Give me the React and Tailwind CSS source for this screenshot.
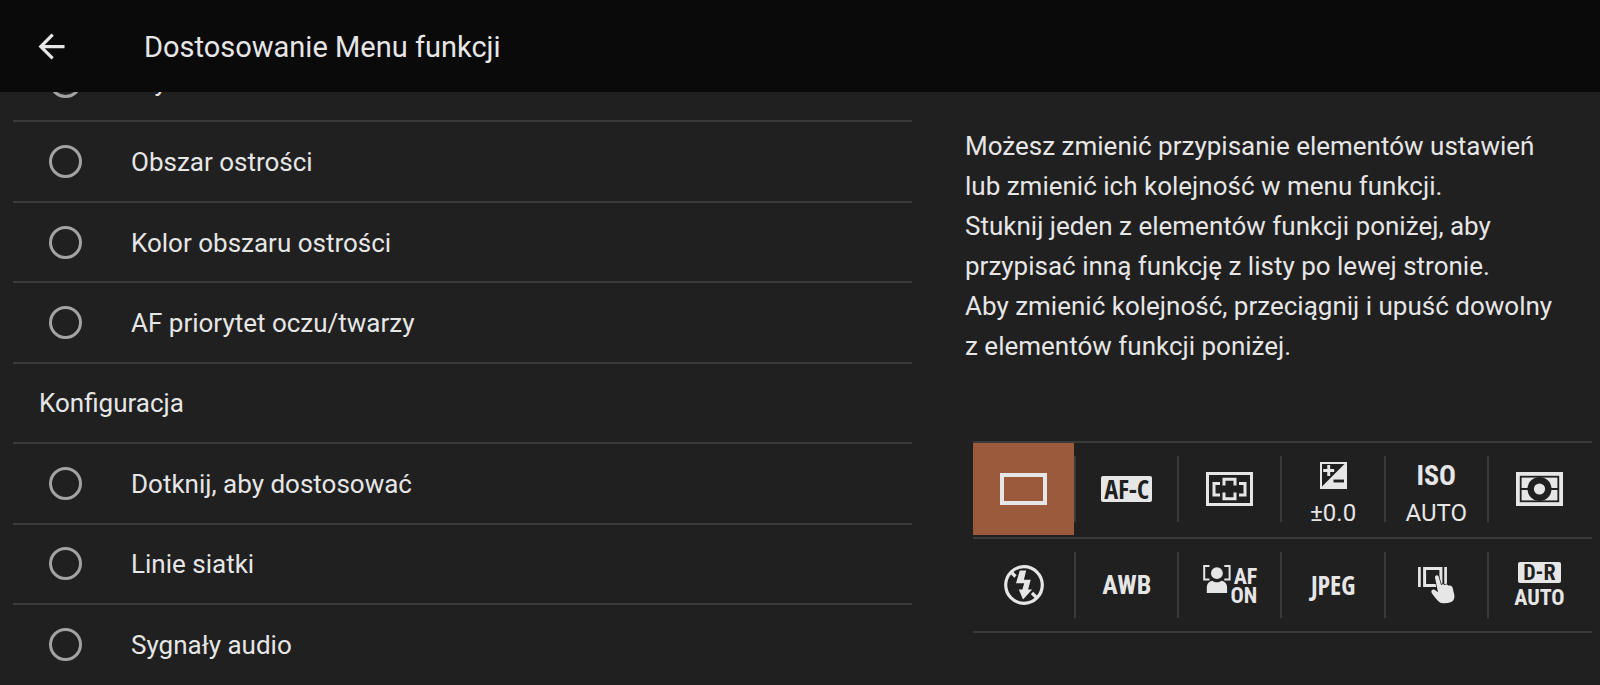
import { useState } from 'react';
import clsx from 'clsx';

const settings = [
  { id: 'focus-mode', label: 'Tryb ostrości' },
  { id: 'focus-area', label: 'Obszar ostrości' },
  { id: 'focus-area-color', label: 'Kolor obszaru ostrości' },
  { id: 'eye-af', label: 'AF priorytet oczu/twarzy' },
  { id: 'setup', label: 'Konfiguracja', heading: true },
  { id: 'touch', label: 'Dotknij, aby dostosować' },
  { id: 'grid', label: 'Linie siatki' },
  { id: 'audio', label: 'Sygnały audio' },
];

function BackIcon() {
  return (
    <svg viewBox="0 0 24 24" className="size-[39px] fill-current" aria-hidden="true">
      <path d="M20 11H7.83l5.59-5.59L12 4l-8 8 8 8 1.41-1.41L7.83 13H20v-2z" />
    </svg>
  );
}

function DriveIcon() {
  return (
    <svg viewBox="0 0 47 32" className="h-8 w-[47px]" fill="none" stroke="currentColor" strokeWidth="4">
      <rect x="2" y="2" width="43" height="28" />
    </svg>
  );
}

function FocusAreaIcon() {
  return (
    <svg viewBox="0 0 47 34" className="h-[34px] w-[47px]" fill="none" stroke="currentColor" strokeWidth="3">
      <rect x="1.5" y="1.5" width="44" height="31" />
      <path d="M14 11.5H8v11.500h6M33 11.500h6v11.500h-6M18 13.600V7.200h11v6.400M18 20.600v6.200h11v-6.200" />
    </svg>
  );
}

function ExposureIcon() {
  return (
    <svg viewBox="0 0 27 27" className="size-[27px]">
      <rect width="27" height="27" fill="currentColor" />
      <path d="M2 2h22.5L2 24.5z" fill="#202020" />
      <path d="M8.7 3v11M3.2 8.5h11" stroke="currentColor" strokeWidth="2.9" />
      <path d="M13.500 19h10.500" stroke="#202020" strokeWidth="2.900" />
    </svg>
  );
}

function MeteringIcon() {
  return (
    <svg viewBox="0 0 47 34" className="h-[34px] w-[47px]">
      <rect width="47" height="34" fill="currentColor" />
      <rect x="4.7" y="4.7" width="37.6" height="24.6" fill="none" stroke="#202020" strokeWidth="1.8" />
      <path d="M4.7 17h37.6" stroke="#202020" strokeWidth="1.8" />
      <circle cx="23.5" cy="17" r="12" fill="#202020" />
      <circle cx="23.5" cy="17" r="5.6" fill="currentColor" />
    </svg>
  );
}

function FlashOffIcon() {
  return (
    <svg viewBox="0 0 40 40" className="size-10">
      <circle cx="20" cy="20" r="18.3" fill="none" stroke="currentColor" strokeWidth="3.2" />
      <path d="M6.5 6.5l5 5M28 28l5.5 5.5" stroke="currentColor" strokeWidth="3.2" />
      <path d="M15.800 5.500h6.400l-2.300 9.200h6.800l-2.600 9.800h4.100L19 34.600l-4.200-10.100h3.600l1.800-6.200h-8.200z" fill="currentColor" />
    </svg>
  );
}

function FaceIcon() {
  return (
    <svg viewBox="0 0 28 28" className="size-7">
      <path d="M6.5 1.1H1.2v13.3h5.3M21.3 1.1h5.3v13.3h-5.3" fill="none" stroke="currentColor" strokeWidth="2" />
      <circle cx="13.9" cy="8.2" r="5.9" fill="currentColor" />
      <path d="M3.8 28v-5.5c0-3.800 2-6 5.600-6.800 2.600 2 6.400 2 9 0 3.600.8 5.700 3 5.700 6.800V28z" fill="currentColor" />
    </svg>
  );
}

function TouchIcon() {
  return (
    <svg viewBox="0 0 37 37" className="size-[37px]">
      <path d="M1.400 0v20M27.600 0v20" stroke="currentColor" strokeWidth="2.700" />
      <rect x="6.600" y="1.500" width="16.300" height="17" fill="none" stroke="currentColor" strokeWidth="3" />
      <path
        d="M17 10.600c-.4-2.700 3-3.400 3.700-.8l2.300 8.200c1.300-.9 2.900-.8 3.800.1 1.600-.9 3-.5 3.700.6 2.300-.7 3.900.5 4.300 2.700l1.500 6.400c.6 3.800-.7 6.500-3.700 7.500-3.800 1.300-9 1.500-11.300-.4-2.500-2.200-5.300-5.600-7.600-9-1.300-2.500 1-4.300 3.200-3l3.100 2.300z"
        fill="currentColor"
        stroke="#202020"
        strokeWidth="1.400"
        paintOrder="stroke"
      />
    </svg>
  );
}

const narrow = 'font-["Open_Sans_Condensed","Roboto_Condensed",sans-serif] font-bold';
const label = 'font-["Roboto_Condensed",sans-serif] font-bold';

const functions = [
  [
    { id: 'drive', name: 'Tryb pracy', content: <DriveIcon /> },
    {
      id: 'focus',
      content: (
        <span className={clsx(narrow, 'rounded-xs bg-[#e6e6e6] px-[3px] text-[26px] leading-[26px] text-[#202020]')}>AF-C</span>
      ),
    },
    { id: 'area', name: 'Obszar ostrości', content: <FocusAreaIcon /> },
    {
      id: 'exposure',
      content: (
        <span className="flex flex-col items-center gap-3 pt-2">
          <ExposureIcon />
          <span className="text-2xl leading-6">±0.0</span>
        </span>
      ),
    },
    {
      id: 'iso',
      content: (
        <span className="flex flex-col items-center gap-3 pt-2">
          <span className={clsx(label, 'text-[28px] leading-[27px]')}>ISO</span>
          <span className="text-2xl leading-6">AUTO</span>
        </span>
      ),
    },
    { id: 'metering', name: 'Pomiar światła', content: <MeteringIcon /> },
  ],
  [
    { id: 'flash', name: 'Lampa błyskowa', content: <FlashOffIcon /> },
    { id: 'awb', content: <span className={clsx(label, 'text-[26px] leading-7')}>AWB</span> },
    {
      id: 'face',
      content: (
        <span className="flex items-start">
          <FaceIcon />
          <span className={clsx(label, 'pt-0.5 text-right text-[22px] leading-[19px]')}>
            AF
            <br />
            ON
          </span>
        </span>
      ),
    },
    { id: 'format', content: <span className={clsx(narrow, 'text-[26px] leading-7')}>JPEG</span> },
    { id: 'touch', name: 'Funkcja dotykowa', content: <TouchIcon /> },
    {
      id: 'dro',
      content: (
        <span className={clsx(label, 'flex flex-col items-center gap-1 text-[22px] leading-[21px]')}>
          <span className="rounded-xs bg-[#e6e6e6] px-[5px] text-[#202020]">D-R</span>
          <span>AUTO</span>
        </span>
      ),
    },
  ],
];

export default function App() {
  const [active, setActive] = useState('drive');
  const [assigned, setAssigned] = useState(null);

  return (
    <div className='flex h-screen flex-col overflow-hidden bg-[#202020] font-["Roboto",sans-serif] text-[26px] text-[#e6e6e6]'>
      <header className="flex h-[92px] shrink-0 items-center gap-[73px] bg-[#0a0a0a] pl-8">
        <button type="button" aria-label="Wstecz">
          <BackIcon />
        </button>
        <h1 className="pt-0.5 text-[29px] leading-9">Dostosowanie Menu funkcji</h1>
      </header>

      <main className="flex min-h-0 flex-1">
        <div className="flex w-[57%] flex-col overflow-hidden pl-[13px]">
          {/* list is scrolled part way into its first row */}
          <ul className="-mt-[50px] flex flex-1 flex-col divide-y-2 divide-[#3a3a3a]">
            {settings.map((item) => (
              <li key={item.id} className="flex min-h-20 flex-1 items-center">
                {item.heading ? (
                  <h2 className="pt-0.5 pl-[26px]">{item.label}</h2>
                ) : (
                  <label className="flex flex-1 items-center gap-[49px] pl-9">
                    <input
                      type="radio"
                      name="setting"
                      checked={assigned === item.id}
                      onChange={() => setAssigned(item.id)}
                      className="size-[33px] appearance-none rounded-full border-[3px] border-[#a3a3a3] checked:bg-[#9c5a3c]"
                    />
                    <span className="pt-0.5">{item.label}</span>
                  </label>
                )}
              </li>
            ))}
          </ul>
        </div>

        <div className="flex-1 pt-[34px] pr-2 pl-[53px]">
          <div className="pr-[27px] leading-10">
            <p>Możesz zmienić przypisanie elementów ustawień lub zmienić ich kolejność w menu funkcji.</p>
            <p>Stuknij jeden z elementów funkcji poniżej, aby przypisać inną funkcję z listy po lewej stronie.</p>
            <p>Aby zmienić kolejność, przeciągnij i upuść dowolny z elementów funkcji poniżej.</p>
          </div>

          <div className="mt-[75px] ml-2 border-b-2 border-[#3a3a3a]">
            {functions.map((row, i) => (
              <div key={i} className={clsx('grid grid-cols-6 border-t-2 border-[#3a3a3a]', i === 0 && 'pb-0.5')}>
                {row.map((fn, j) => (
                  <div key={fn.id} className="flex items-center">
                    <button
                      type="button"
                      aria-label={fn.name}
                      onClick={() => setActive(fn.id)}
                      className={clsx('flex h-[92px] flex-1 items-center justify-center', active === fn.id && 'bg-[#9c5a3c]')}
                    >
                      {fn.content}
                    </button>
                    <span className={clsx('h-[66px] w-0.5', j < row.length - 1 && 'bg-[#3a3a3a]')} />
                  </div>
                ))}
              </div>
            ))}
          </div>
        </div>
      </main>
    </div>
  );
}
